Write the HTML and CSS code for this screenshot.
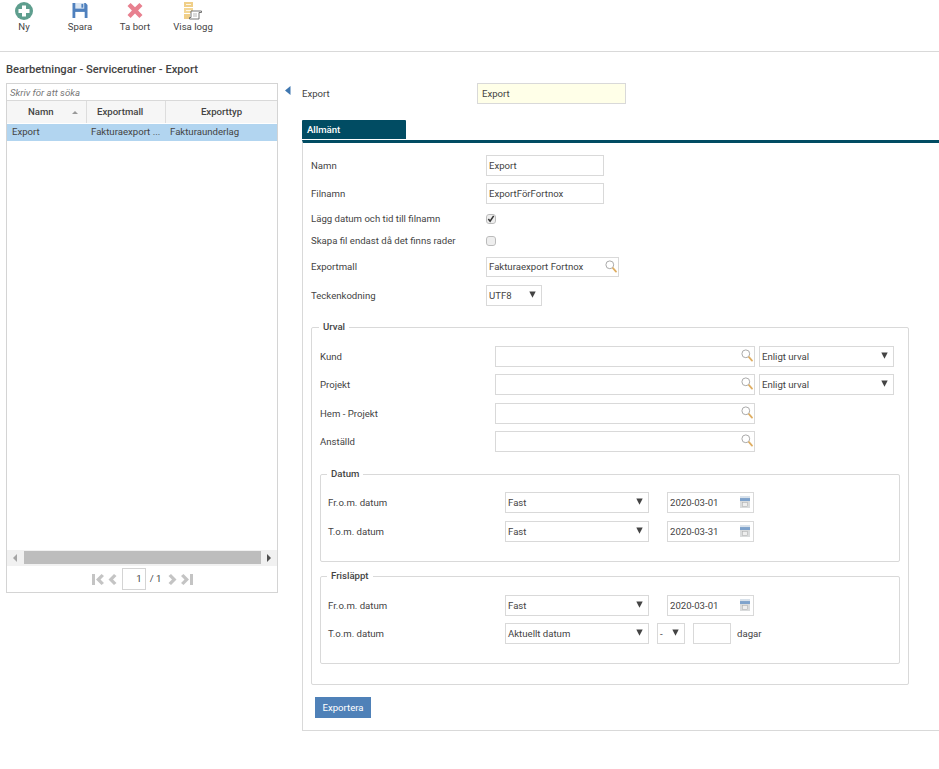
FILE: index.html
```html
<!DOCTYPE html>
<html lang="sv">
<head>
<meta charset="utf-8">
<title>Export</title>
<link rel="stylesheet" href="styles.css">
</head>
<body>
<svg class="defs" width="0" height="0">
  <symbol id="mag" viewBox="0 0 12 13">
    <circle cx="4.800" cy="4.800" r="3.900" fill="#fff" stroke="#aaa" stroke-width="1"/>
    <path d="M8 8.200l3 3.400" stroke="#dfae62" stroke-width="1.800" stroke-linecap="round"/>
  </symbol>
  <symbol id="cal" viewBox="0 0 10 12">
    <rect x="0" y="3" width="10" height="9" fill="#d9dbdc"/>
    <rect x="0" y="2" width="10" height="3" fill="#7fa3cc"/>
    <path d="M1 0v2.500M3 0v2.500M5 0v2.500M7 0v2.500M9 0v2.500" stroke="#9db4cc" stroke-width=".8"/>
    <rect x="2.500" y="6.500" width="5" height="4" fill="#eee" stroke="#aaa" stroke-width=".5"/>
  </symbol>
  <symbol id="arrow" viewBox="0 0 7 7">
    <path d="M.3 .5h6.400L3.500 6.800z" fill="#444"/>
  </symbol>
</svg>

<header class="toolbar">
  <div class="tool tool-ny">
    <svg class="tool-icon" viewBox="0 0 18 18"><circle cx="9" cy="9" r="9" fill="#5e9e8e"/><path d="M7 3.500h4V7h3.500v4H11v3.500H7V11H3.500V7H7z" fill="#fff"/></svg>
    <span>Ny</span>
  </div>
  <div class="tool tool-spara">
    <svg class="tool-icon icon-16" viewBox="0 0 16 16"><path d="M0 0h14l2 2v14H0z" fill="#4f80bd"/><rect x="3" y="0" width="9.500" height="6" fill="#dbe6f2"/><rect x="9.500" y="1" width="2" height="4" fill="#4f80bd"/><rect x="3" y="9.500" width="10" height="6.500" fill="#fff"/></svg>
    <span>Spara</span>
  </div>
  <div class="tool tool-bort">
    <svg class="tool-icon icon-16" viewBox="0 0 16 16"><path d="M3.300 0L8 4.600 12.700 0 16 3.300 11.300 8 16 12.700 12.700 16 8 11.300 3.300 16 0 12.700 4.700 8 0 3.300z" fill="#e8808f"/></svg>
    <span>Ta bort</span>
  </div>
  <div class="tool tool-logg">
    <svg class="tool-icon" viewBox="0 0 18 18"><rect x="0" y="0" width="9" height="5" fill="#f0cf88"/><rect x="0" y="6" width="9" height="5" fill="#f3d796"/><rect x="0" y="12" width="6" height="5" fill="#f0cf88"/><path d="M2 2.500h5M2 8.500h5" stroke="#fff" stroke-width=".8"/><path d="M7 9h10.500v1.500h-2.500V17H5.500v-1.500H7z" fill="#fff" stroke="#666" stroke-width=".9"/><path d="M9 12h4M9 14h4" stroke="#999" stroke-width=".7"/></svg>
    <span>Visa logg</span>
  </div>
</header>

<h1 class="page-title">Bearbetningar - Servicerutiner - Export</h1>

<main class="content">
  <aside class="list-panel">
    <div class="search">Skriv för att söka</div>
    <div class="grid-head">
      <div class="col col-1 head-namn">Namn<span class="sort"></span></div>
      <div class="col col-2">Exportmall</div>
      <div class="col col-3 head-center">Exporttyp</div>
    </div>
    <div class="grid-row">
      <div class="col col-1">Export</div>
      <div class="col col-2">Fakturaexport ...</div>
      <div class="col col-3 cell-3">Fakturaunderlag</div>
    </div>
    <div class="grid-space"></div>
    <div class="hscroll">
      <span class="tri tri-left"></span>
      <span class="thumb"></span>
      <span class="tri tri-right"></span>
    </div>
    <div class="pager">
      <svg class="pg pg-end" viewBox="0 0 12 11"><path d="M0 0h3v11H0zM9.500 0L12 2 8.500 5.500 12 9l-2.500 2L4 5.500z" fill="#c4c4c4"/></svg>
      <svg class="pg pg-step" viewBox="0 0 9 11"><path d="M6 0l2.500 2L5 5.500 8.500 9 6 11 .5 5.500z" fill="#c4c4c4"/></svg>
      <span class="page-box">1</span>
      <span class="page-total">/ 1</span>
      <svg class="pg pg-step" viewBox="0 0 9 11"><path d="M3 0L.5 2 4 5.500.5 9 3 11l5.500-5.500z" fill="#c4c4c4"/></svg>
      <svg class="pg pg-end" viewBox="0 0 12 11"><path d="M9 0h3v11H9zM2.500 0L0 2l3.500 3.500L0 9l2.500 2L8 5.500z" fill="#c4c4c4"/></svg>
    </div>
  </aside>

  <div class="collapse"><svg viewBox="0 0 6 9" width="6" height="9"><path d="M5.500 0v9L0 4.500z" fill="#3f77b0"/></svg></div>

  <section class="detail">
    <div class="top-row">
      <label class="top-label">Export</label>
      <input class="inp top-input" value="Export">
    </div>
    <div class="tab">Allmänt</div>
    <div class="tab-panel">
      <div class="frow r-namn"><label>Namn</label><input class="inp w118" value="Export"></div>
      <div class="frow r-filnamn"><label>Filnamn</label><input class="inp w118" value="ExportFörFortnox"></div>
      <div class="frow r-check1"><label>Lägg datum och tid till filnamn</label><span class="check"><svg viewBox="0 0 9 9" width="8" height="8"><path d="M1.500 4.500l2 2.500 4-6" fill="none" stroke="#333" stroke-width="1.700"/></svg></span></div>
      <div class="frow r-check2"><label>Skapa fil endast då det finns rader</label><span class="check"></span></div>
      <div class="frow r-mall"><label>Exportmall</label><div class="look w133"><span>Fakturaexport Fortnox</span><svg class="mag"><use href="#mag"/></svg></div></div>
      <div class="frow r-teck"><label>Teckenkodning</label><div class="sel w56"><span>UTF8</span><svg class="arr"><use href="#arrow"/></svg></div></div>

      <fieldset class="fs fs-urval">
        <legend>Urval</legend>
        <div class="urow"><label>Kund</label><div class="look w260"><span></span><svg class="mag"><use href="#mag"/></svg></div><div class="sel w135"><span>Enligt urval</span><svg class="arr"><use href="#arrow"/></svg></div></div>
        <div class="urow"><label>Projekt</label><div class="look w260"><span></span><svg class="mag"><use href="#mag"/></svg></div><div class="sel w135"><span>Enligt urval</span><svg class="arr"><use href="#arrow"/></svg></div></div>
        <div class="urow urow-hem"><label>Hem - Projekt</label><div class="look w260"><span></span><svg class="mag"><use href="#mag"/></svg></div></div>
        <div class="urow"><label>Anställd</label><div class="look w260"><span></span><svg class="mag"><use href="#mag"/></svg></div></div>

        <fieldset class="fs fs-datum">
          <legend>Datum</legend>
          <div class="drow"><label>Fr.o.m. datum</label><div class="sel w144"><span>Fast</span><svg class="arr"><use href="#arrow"/></svg></div><div class="date"><span>2020-03-01</span><svg class="cal"><use href="#cal"/></svg></div></div>
          <div class="drow"><label>T.o.m. datum</label><div class="sel w144"><span>Fast</span><svg class="arr"><use href="#arrow"/></svg></div><div class="date"><span>2020-03-31</span><svg class="cal"><use href="#cal"/></svg></div></div>
        </fieldset>

        <fieldset class="fs fs-fri">
          <legend>Frisläppt</legend>
          <div class="drow"><label>Fr.o.m. datum</label><div class="sel w144"><span>Fast</span><svg class="arr"><use href="#arrow"/></svg></div><div class="date"><span>2020-03-01</span><svg class="cal"><use href="#cal"/></svg></div></div>
          <div class="drow"><label>T.o.m. datum</label><div class="sel w144"><span>Aktuellt datum</span><svg class="arr"><use href="#arrow"/></svg></div><div class="sel w28"><span>-</span><svg class="arr"><use href="#arrow"/></svg></div><input class="inp w38"><span class="dagar">dagar</span></div>
        </fieldset>
      </fieldset>

      <button class="btn">Exportera</button>
    </div>
  </section>
</main>
</body>
</html>
```
FILE: styles.css
```css
* { box-sizing: border-box; }
html, body { margin: 0; padding: 0; }
body { width: 939px; height: 769px; overflow: hidden; background: #fff; color: #444; font: 9.6px/12px Roboto, sans-serif; }
.defs { position: absolute; }
label { display: block; }

.toolbar { height: 52px; border-bottom: 1px solid #d9d9d9; display: flex; padding-top: 2px; }
.tool { display: flex; flex-direction: column; align-items: center; gap: 1px; width: 56px; }
.tool-ny { margin-left: -4px; }
.tool-bort { margin-left: -1px; }
.tool-logg { margin-left: 2px; }
.tool-icon { width: 18px; height: 18px; flex: none; }
.icon-16 { width: 16px; height: 15px; margin-top: 1px; margin-bottom: 2px; }
.tool span { display: block; }

.page-title { margin: 11px 0 0 6px; font-size: 11.2px; line-height: 13px; font-weight: 500; color: #444; }

.content { display: flex; margin: 7px 0 0 6px; align-items: flex-start; }

.list-panel { width: 272px; height: 510px; border: 1px solid #d4d4d4; display: flex; flex-direction: column; flex: none; }
.search { height: 17px; padding: 0 3px; line-height: 18px; font-style: italic; color: #777; border-bottom: 1px solid #d9d9d9; flex: none; }
.grid-head { display: flex; height: 22px; line-height: 21px; background: #f6f6f6; font-weight: 500; flex: none; }
.col { padding-left: 4px; white-space: nowrap; overflow: hidden; flex: none; }
.col-1 { width: 80px; }
.col-2 { width: 79px; }
.col-3 { width: 111px; }
.grid-head .col { border-right: 1px solid #ddd; height: 22px; }
.grid-head .col-3 { border-right: 0; }
.head-namn { padding-left: 21px; position: relative; }
.grid-head .col-2 { padding-left: 10px; }
.head-center { text-align: center; padding: 0; }
.sort { position: absolute; left: 65px; top: 10px; border: 3.500px solid transparent; border-top: 0; border-bottom: 3px solid #999; }
.grid-row { display: flex; height: 17px; margin-top: 1px; line-height: 16px; background: #b2d5f0; flex: none; }
.grid-row .col-1 { padding-left: 5px; }
.grid-row .col-2 { padding-left: 4px; }
.cell-3 { padding-left: 4px; }
.grid-space { flex: 1; }
.hscroll { height: 16px; background: #f1f1f1; display: flex; align-items: center; padding: 0 6px 1px 6px; flex: none; }
.thumb { flex: 1; height: 13px; background: #bdbdbd; margin: 0 6px 0 7px; }
.tri { width: 0; height: 0; border: 4px solid transparent; border-left-width: 0; border-right-width: 0; }
.tri-left { border-right: 4px solid #a5a5a5; }
.tri-right { border-left: 4px solid #505050; }
.pager { height: 26px; display: flex; align-items: center; justify-content: center; gap: 4px; padding-left: 1px; flex: none; }
.pg { height: 11px; flex: none; }
.pg-end { width: 12px; }
.pg-step { width: 9px; }
.page-box { width: 24px; height: 22px; border: 1px solid #d4d4d4; text-align: right; padding-right: 3px; line-height: 20px; margin: 0 0 0 1px; }
.page-total { margin-right: 3px; }

.collapse { width: 24px; flex: none; padding: 3px 0 0 7px; line-height: 0; }

.detail { width: 637px; flex: none; }
.top-row { display: flex; align-items: center; height: 21px; }
.top-label { width: 175px; }
.inp { border: 1px solid #d9d9d9; background: #fff; color: #444; font: 9.6px/12px Roboto, sans-serif; padding: 0 2px; margin: 0; border-radius: 0; outline: 0; display: block; }
.top-input { width: 149px; height: 21px; background: #ffffe8; padding-left: 4px; }
.tab { width: 104px; height: 19px; margin: 16px 0 1px; background: #014c63; color: #fff; font-weight: 500; padding-left: 5px; line-height: 19px; border-radius: 1px 1px 0 0; }
.tab-panel { border-top: 3px solid #014c63; border-left: 1px solid #d9d9d9; border-bottom: 1px solid #d9d9d9; height: 591px; padding: 12px 0 0 8px; }

.frow { display: flex; align-items: center; }
.frow label { width: 175px; }
.r-namn { height: 21px; }
.r-filnamn { height: 21px; margin-top: 7px; }
.r-check1 { height: 13px; margin-top: 8px; }
.r-check2 { height: 13px; margin-top: 9px; }
.r-mall { height: 20px; margin-top: 10px; }
.r-teck { height: 21px; margin-top: 8px; }
.w118 { width: 118px; height: 21px; }
.w133 { width: 133px; height: 20px; }
.w56 { width: 56px; height: 21px; }
.w260 { width: 260px; height: 21px; }
.w135 { width: 135px; height: 21px; margin-left: 4px; }
.w144 { width: 144px; height: 21px; }
.w28 { width: 28px; height: 21px; margin-left: 8px; }
.w38 { width: 38px; height: 21px; margin-left: 8px; }
.check { width: 8px; height: 8px; box-sizing: content-box; outline: 1px solid #bbb; background: #eee; border-radius: 2px; display: block; line-height: 0; margin-left: 1px; }

.look, .sel, .date { border: 1px solid #d9d9d9; display: flex; align-items: center; justify-content: space-between; background: #fff; flex: none; }
.look { padding: 0 1px 0 2px; }
.sel { padding: 0 5px 0 2px; }
.date { width: 87px; height: 21px; margin-left: 18px; padding: 0 3px 0 2px; }
.mag { width: 12px; height: 13px; margin-top: -2px; }
.arr { width: 7px; height: 7px; margin-top: -2px; }
.cal { width: 10px; height: 12px; margin-top: -1px; }

.fs { margin: 0; padding: 0; border: 1px solid #d9d9d9; border-radius: 2px; min-width: 0; }
.fs legend { padding: 0 4px; margin-left: 7px; font-weight: 500; line-height: 12px; }
.fs-urval { width: 598px; height: 364px; margin-top: 15px; padding: 13px 0 0 0; }
.urow { display: flex; align-items: center; height: 21px; margin: 0 0 7px 8px; }
.urow-hem { margin-top: 8px; }
.urow label { width: 175px; }
.fs-datum { width: 580px; height: 94px; margin: 16px 0 0 8px; padding: 12px 0 0 0; }
.fs-fri { width: 580px; height: 94px; margin: 8px 0 0 8px; padding: 13px 0 0 0; }
.fs-datum legend, .fs-fri legend { margin-left: 6px; }
.drow { display: flex; align-items: center; height: 21px; margin: 0 0 8px 7px; }
.fs-fri .drow { margin-bottom: 7px; }
.drow label { width: 177px; }
.dagar { margin-left: 6px; }

.btn { display: block; width: 56px; height: 21px; margin: 12px 0 0 4px; background: #4f81b8; color: #fff; border: 0; padding: 0; font: 9.6px/12px Roboto, sans-serif; }
```
